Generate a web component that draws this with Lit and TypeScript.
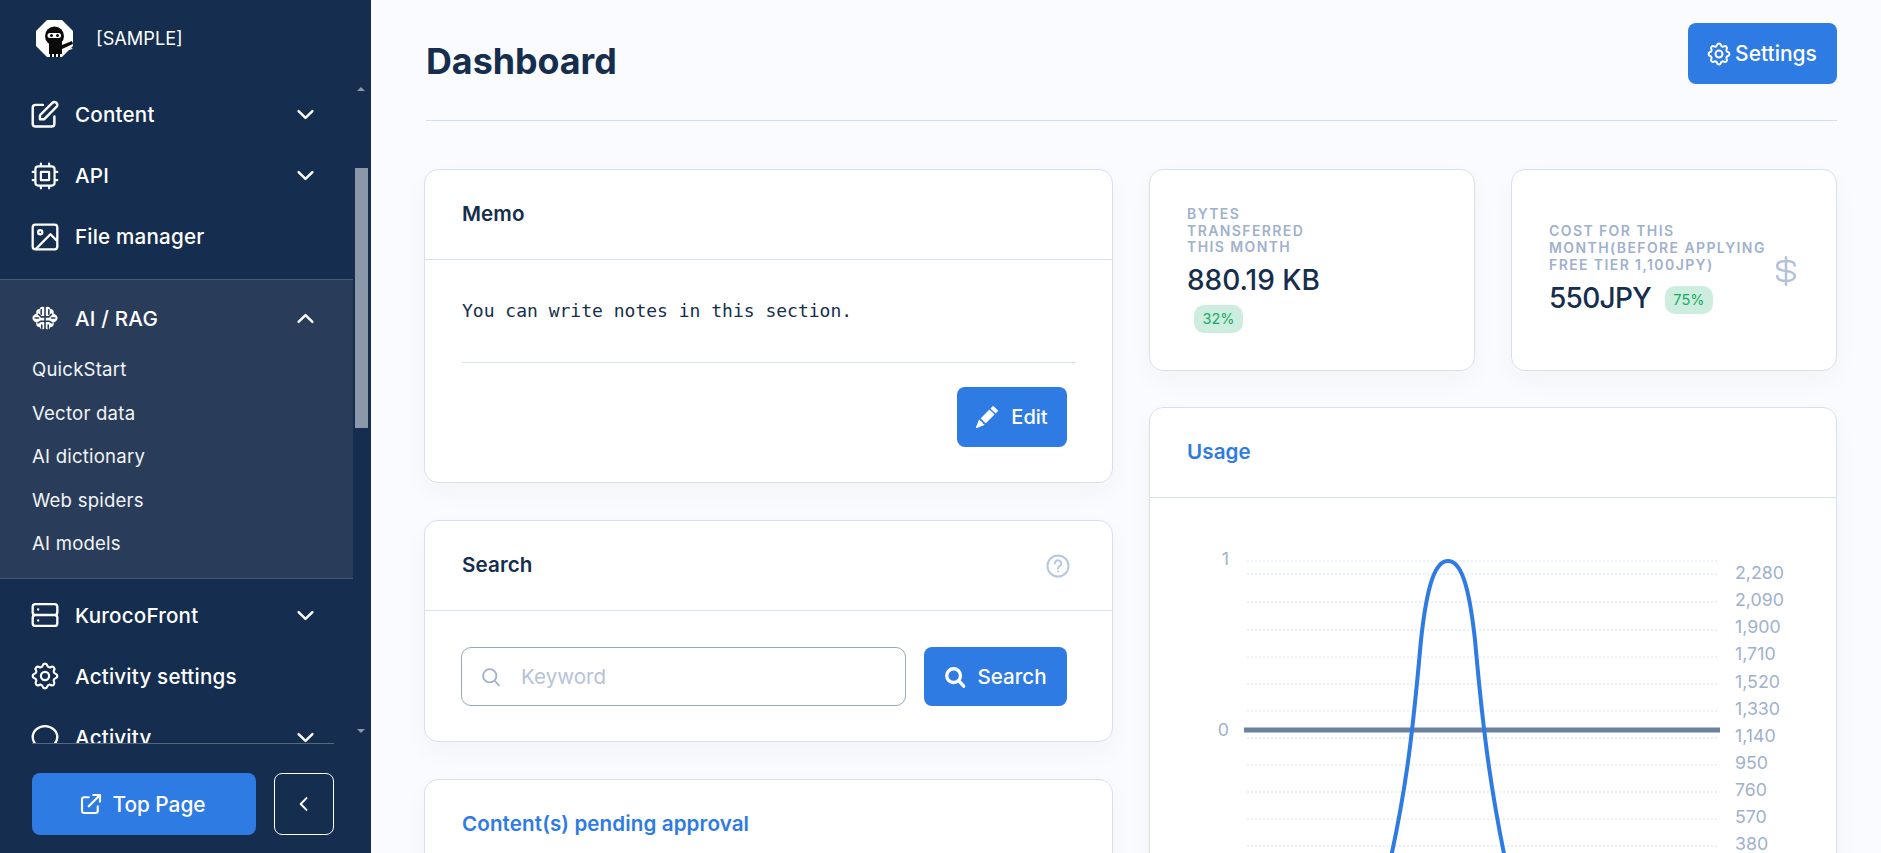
import { LitElement, html, css, svg } from "lit";
import { customElement } from "lit/decorators.js";

const ic = (d: string, w = 2, vb = "0 0 24 24") => html`<svg class="ic" viewBox=${vb} fill="none" stroke="currentColor" stroke-width=${w} stroke-linecap="round" stroke-linejoin="round"><path d=${d}></path></svg>`;
const TIGHT = "2.5 2.5 19 19";
const P = {
  edit: "M11 5H6a2 2 0 00-2 2v11a2 2 0 002 2h11a2 2 0 002-2v-5m-1.414-9.414a2 2 0 112.828 2.828L11.828 15H9v-2.828l8.586-8.586z",
  chip: "M9 3v2m6-2v2M9 19v2m6-2v2M5 9H3m2 6H3m18-6h-2m2 6h-2M7 19h10a2 2 0 002-2V7a2 2 0 00-2-2H7a2 2 0 00-2 2v10a2 2 0 002 2zM9 9h6v6H9V9z",
  photo: "M5 3h14a2 2 0 012 2v14a2 2 0 01-2 2H5a2 2 0 01-2-2V5a2 2 0 012-2zM21 15l-5-5L5 21M8.5 7a1.5 1.5 0 110 3 1.5 1.5 0 010-3z",
  server: "M5 12h14M5 12a2 2 0 01-2-2V6a2 2 0 012-2h14a2 2 0 012 2v4a2 2 0 01-2 2M5 12a2 2 0 00-2 2v4a2 2 0 002 2h14a2 2 0 002-2v-4a2 2 0 00-2-2M7 8h.01M7 16h.01",
  cog: "M10.325 4.317c.426-1.756 2.924-1.756 3.35 0a1.724 1.724 0 002.573 1.066c1.543-.94 3.31.826 2.37 2.37a1.724 1.724 0 001.065 2.572c1.756.426 1.756 2.924 0 3.35a1.724 1.724 0 00-1.066 2.573c.94 1.543-.826 3.31-2.37 2.37a1.724 1.724 0 00-2.572 1.065c-.426 1.756-2.924 1.756-3.35 0a1.724 1.724 0 00-2.573-1.066c-1.543.94-3.31-.826-2.37-2.37a1.724 1.724 0 00-1.065-2.572c-1.756-.426-1.756-2.924 0-3.35a1.724 1.724 0 001.066-2.573c-.94-1.543.826-3.31 2.37-2.37.996.608 2.296.07 2.572-1.065zM15 12a3 3 0 11-6 0 3 3 0 016 0z",
  chat: "M21 12c0 4.418-4.03 8-9 8a9.863 9.863 0 01-4.255-.949L3 20l1.395-3.72C3.512 15.042 3 13.574 3 12c0-4.418 4.03-8 9-8s9 3.582 9 8z",
  ext: "M10 6H6a2 2 0 00-2 2v10a2 2 0 002 2h10a2 2 0 002-2v-4M14 4h6m0 0v6m0-6L10 14",
  down: "M6 9l6 6 6-6",
  up: "M6 15l6-6 6 6",
  left: "M15 5l-7 7 7 7",
  dollar: "M19 7.5C19 5 16 4 12 4S5 5 5 8s3 3.5 7 4 7 1.5 7 4-3 4-7 4-7-1-7-4M12 1v22",
};
const brain = html`<svg class="ic" viewBox="0 0 24 24"><path fill="#fff" d="M12 2.5C10.5 1 7.5 1.2 7 3.6 4.6 3.6 3.4 5.6 4.1 7.8 1.6 8.7.4 10.6.4 12s1.2 3.3 3.7 4.2C3.400 18.400 4.600 20.400 7 20.400c.5 2.400 3.500 2.600 5 1.100 1.500 1.500 4.500 1.300 5-1.100 2.400 0 3.600-2 2.900-4.200 2.500-.900 3.700-2.800 3.700-4.200s-1.200-3.300-3.700-4.200C20.600 5.600 19.400 3.600 17 3.600 16.500 1.200 13.500 1 12 2.500z"></path>
  <path fill="none" stroke="#293d5a" stroke-width="1.5" stroke-linecap="round" d="M12 1.500v21M12 11H8.500L6 8.500M12 11h3.500L18 8.500M8.500 4.500v4M15.500 4.500v4M12 15H8l-2.500 1.500M12 15h4l2.500 1.500M3 12h3M21 12h-3M9 18.500v3M15 18.500v3"></path></svg>`;
const pencil = html`<svg class="ic" viewBox="0 0 16 16" fill="currentColor"><path d="M12.854.146a.5.5 0 00-.707 0L10.5 1.793 14.207 5.5l1.647-1.646a.5.5 0 000-.708l-3-3zm.646 6.061L9.793 2.5 3.293 9H3.500a.5.5 0 01.5.5v.5h.5a.5.5 0 01.5.5v.5h.5a.5.5 0 01.5.5v.5h.5a.5.5 0 01.5.5v.207l6.500-6.500zm-7.468 7.468A.5.5 0 016 13.500V13h-.5a.5.5 0 01-.5-.5V12h-.5a.5.5 0 01-.5-.5V11h-.5a.5.5 0 01-.5-.5V10h-.5a.499.499 0 01-.175-.032l-.179.178a.5.5 0 00-.11.168l-2 5a.5.5 0 00.65.65l5-2a.5.5 0 00.168-.11l.178-.178z"></path></svg>`;
const searchSolid = html`<svg class="ic" viewBox="0 0 24 24" fill="none" stroke="currentColor" stroke-width="3.6" stroke-linecap="round"><circle cx="10.5" cy="10.5" r="7.5"></circle><path d="M16.5 16.5L21.5 22"></path></svg>`;
const searchThin = html`<svg class="ic" viewBox="0 0 24 24" fill="none" stroke="currentColor" stroke-width="2.2" stroke-linecap="round"><circle cx="10.5" cy="10.5" r="8"></circle><path d="M16.500 16.500L21.500 22"></path></svg>`;
const help = html`<svg class="ic" viewBox="0 0 24 24" fill="none" stroke="currentColor" stroke-width="2" stroke-linecap="round"><circle cx="12" cy="12" r="10.5"></circle><path d="M8.800 9.500a3.200 3.200 0 116 1.500c-.8 1.200-2.800 1.600-2.800 3.400M12 17.600h.01"></path></svg>`;
const logo = html`<svg class="logo" viewBox="0 0 37 37"><polygon fill="#fff" points="11,0 26,0 37,11 37,26 26,37 11,37 0,26 0,11"></polygon>
  <circle cx="18.500" cy="16" r="9.500" fill="#0b0b0b"></circle>
  <path fill="#0b0b0b" d="M13 22h13v12H13zM26 25l10-4 1 3-11 5z"></path>
  <path fill="#fff" d="M26 31l10-3 .5 1-10.500 3z"></path>
  <path fill="#0b0b0b" d="M14 33h2v4h-2zM18 33h2v4h-2zM22 33h2v4h-2z"></path>
  <rect x="11.500" y="13" width="13.500" height="5" rx="2.500" fill="#fff"></rect><circle cx="15.500" cy="15.500" r="1.500" fill="#0b0b0b"></circle><circle cx="21.500" cy="15.500" r="1.500" fill="#0b0b0b"></circle></svg>`;

@customElement("app-root")
export class AppRoot extends LitElement {
  static styles = css`
    :host { display: block; width: 1881px; height: 853px; overflow: hidden; font-family: Inter, "Noto Sans", sans-serif; color: #152e4d; background: #fafbfe; }
    * { box-sizing: border-box; }
    .ic { display: block; flex: none; overflow: visible; }
    .app { display: flex; height: 853px; }

    .side { width: 371px; flex: none; background: #152e4f; color: #fff; display: flex; flex-direction: column; height: 853px; }
    .brand { height: 74px; flex: none; display: flex; align-items: flex-start; padding: 20px 0 0 36px; }
    .logo { width: 37px; height: 37px; display: block; }
    .brand span { margin-left: 23px; font-size: 18.2px; line-height: 36px; color: #fff; }
    .navwrap { display: flex; height: 669px; flex: none; }
    .nav { width: 353px; flex: none; overflow: hidden; height: 669px; }
    .row { display: flex; align-items: center; height: 61px; padding-left: 32px; font-size: 20.6px; letter-spacing: .2px; font-weight: 500; color: #fff; }
    .row > .ic { width: 26px; height: 26px; }
    .row .lbl { margin-left: 17px; flex: 1; }
    .row .chev { width: 15px; height: 15px; margin-right: 40px; }
    .row .chev .ic { width: 15px; height: 15px; }
    .first { margin-top: 10px; }
    .group { background: #293d5a; border-top: 1px solid #48596f; border-bottom: 1px solid #48596f; margin-top: 12px; padding-bottom: 12px; margin-bottom: 6px; }
    .group .row { height: 64px; margin-top: 6px; }
    .sub { display: block; height: 43.5px; line-height: 43.5px; padding-left: 32px; font-size: 18.6px; letter-spacing: .2px; color: #f2f4f7; }
    .group .sub:first-of-type { margin-top: -2px; }
    .bar { width: 18px; flex: none; display: flex; flex-direction: column; align-items: flex-start; }
    .arrow { width: 0; height: 0; border-left: 4px solid transparent; border-right: 4px solid transparent; margin-left: 4px; }
    .arrow.u { border-bottom: 4px solid #8a98aa; margin-top: 13px; }
    .arrow.d { border-top: 4px solid #8a98aa; margin-top: 301px; }
    .thumb { width: 13px; height: 260px; margin: 77px 0 0 2px; background: #8a98aa; }
    .foot { flex: none; margin: 0 37px 0 32px; border-top: 1px solid #57687e; padding-top: 29px; display: flex; gap: 18px; }
    .top { width: 224px; height: 62px; border-radius: 8px; background: #2e7be4; display: flex; align-items: center; justify-content: center; gap: 12px; font-size: 20.8px; font-weight: 500; color: #fff; }
    .top .ic { width: 18px; height: 18px; }
    .collapse { width: 60px; height: 62px; border: 1px solid #fff; border-radius: 8px; display: flex; align-items: center; justify-content: center; color: #fff; }
    .collapse .ic { width: 20px; height: 20px; }

    .main { flex: 1; min-width: 0; height: 853px; overflow: hidden; padding: 0 44px 0 54px; }
    .head { height: 121px; display: flex; justify-content: space-between; align-items: flex-start; border-bottom: 1px solid #d3e0ef; margin-left: 1px; }
    h1 { margin: 38px 0 0; font-size: 35.8px; line-height: 46px; font-weight: 700; color: #152e4d; }
    .btn { display: flex; align-items: center; justify-content: center; background: #2e7be4; color: #fff; border-radius: 8px; font-weight: 500; }
    .settings { margin-top: 23px; width: 149px; height: 61px; font-size: 21px; gap: 5px; }
    .settings .ic { width: 22px; height: 22px; }
    .cols { display: grid; grid-template-columns: 1fr 1fr; column-gap: 36px; margin: 48px 1px 0 -1px; width: 1412px; }
    .left { display: flex; flex-direction: column; gap: 37px; }
    .right { display: flex; flex-direction: column; gap: 36px; }
    .stats { display: grid; grid-template-columns: 1fr 1fr; gap: 36px; }
    .card { background: #fff; border: 1px solid #d7e0ee; border-radius: 14px; box-shadow: 0 10px 24px rgba(46, 54, 80, .035); }
    .chd { height: 90px; border-bottom: 1px solid #d7e0ee; display: flex; align-items: center; justify-content: space-between; padding: 0 37px 2px; font-size: 20.6px; letter-spacing: .1px; font-weight: 600; color: #152e4d; }
    .link { color: #2e7be4; }
    .cbody { padding: 37px 36px 35px 37px; }
    .memo { margin: 0; font: 18px/27px "DejaVu Sans Mono", monospace; color: #152e4d; padding-bottom: 38px; border-bottom: 1px solid #d7e0ee; }
    .acts { display: flex; justify-content: flex-end; padding: 24px 9px 0 0; }
    .edit { width: 110px; height: 60px; font-size: 20px; gap: 13px; }
    .edit .ic { width: 22px; height: 22px; }
    .help { color: #b7c7df; width: 24px; height: 24px; margin: 2px 5px 0 0; }
    .sform { display: flex; padding: 36px 45px 35px 36px; gap: 18px; }
    .input { width: 445px; height: 59px; border: 1px solid #98a8c2; border-radius: 10px; display: flex; align-items: center; padding-left: 19px; gap: 20px; font-size: 20.6px; color: #b5c3da; }
    .input .ic { width: 20px; height: 20px; color: #a0b1cb; }
    .sbtn { width: 143px; height: 59px; font-size: 20.6px; gap: 11px; }
    .sbtn .ic { width: 22px; height: 22px; }
    .third { height: 200px; }
    .stat { height: 202px; display: flex; align-items: center; padding-left: 37px; }
    .sl { font-size: 14px; line-height: 16.7px; letter-spacing: 1.4px; font-weight: 600; color: #a0b1cd; text-transform: uppercase; white-space: nowrap; }
    .val { font-size: 28px; line-height: 37px; font-weight: 500; color: #152e4d; margin-top: 6px; }
    .jpy { letter-spacing: -.7px; }
    .badge { display: inline-block; margin-left: 7px; height: 28px; padding: 0 8.5px; line-height: 28px; letter-spacing: 0; border-radius: 10px; background: #cdeede; color: #18a966; font-size: 14.5px; font-weight: 400; vertical-align: 3px; }
    .c1 { width: 170px; padding-top: 2px; }
    .c2 { width: 222px; }
    .dollar { width: 30px; height: 30px; color: #b4c2d9; margin-top: 2px; }
    .dollar .ic { width: 30px; height: 30px; }
    .usage { height: 520px; }
    .chart { display: block; width: 686px; height: 420px; }
    .chart text { font-family: Inter, sans-serif; font-size: 17.8px; fill: #a0b1cd; }
  `;

  private chart() {
    const grid = [561, 574, 602, 630, 657, 684, 711, 738, 765, 792, 819, 846];
    const labels: [string, number][] = [["2,280", 573], ["2,090", 600], ["1,900", 627], ["1,710", 654], ["1,520", 681.5], ["1,330", 709], ["1,140", 736], ["950", 763], ["760", 790], ["570", 817], ["380", 844]];
    return html`<svg class="chart" viewBox="1149 498 686 420">
      ${grid.map((y) => svg`<line x1="1246" x2="1718" y1=${y} y2=${y} stroke="#d9e3f1" stroke-width="1" stroke-dasharray="2 2"></line>`)}
      <text x="1228" y="565" text-anchor="end">1</text>
      <text x="1228" y="736" text-anchor="end">0</text>
      ${labels.map(([t, y]) => svg`<text x="1734" y=${y + 6}>${t}</text>`)}
      <rect x="1243" y="727.5" width="476" height="5" fill="#6d81a0"></rect>
      <path d="M1380 900C1405 800 1412 730 1420 640 1426 585 1434 561 1447 561 1460 561 1468 585 1474 640 1482 730 1490 800 1513 900" fill="none" stroke="#2e7be4" stroke-width="4"></path>
    </svg>`;
  }

  render() {
    const chev = (d: string) => html`<span class="chev">${ic(d, 2.1, "5.5 5.5 13 13")}</span>`;
    return html`<div class="app">
      <aside class="side">
        <div class="brand">${logo}<span>[SAMPLE]</span></div>
        <div class="navwrap">
          <nav class="nav">
            <div class="row first">${ic(P.edit, 1.7, "3.500 3 18 18")}<span class="lbl">Content</span>${chev(P.down)}</div>
            <div class="row">${ic(P.chip, 1.6, TIGHT)}<span class="lbl">API</span>${chev(P.down)}</div>
            <div class="row">${ic(P.photo, 1.7, TIGHT)}<span class="lbl">File manager</span></div>
            <div class="group">
              <div class="row">${brain}<span class="lbl">AI / RAG</span>${chev(P.up)}</div>
              ${["QuickStart", "Vector data", "AI dictionary", "Web spiders", "AI models"].map((s) => html`<a class="sub">${s}</a>`)}
            </div>
            <div class="row">${ic(P.server, 1.7, TIGHT)}<span class="lbl">KurocoFront</span>${chev(P.down)}</div>
            <div class="row">${ic(P.cog, 1.6, TIGHT)}<span class="lbl">Activity settings</span></div>
            <div class="row">${ic(P.chat, 1.7, TIGHT)}<span class="lbl">Activity</span>${chev(P.down)}</div>
          </nav>
          <div class="bar"><span class="arrow u"></span><div class="thumb"></div><span class="arrow d"></span></div>
        </div>
        <div class="foot">
          <div class="top">${ic(P.ext, 1.9, "4 4 16 16")}<span>Top Page</span></div>
          <div class="collapse">${ic(P.left, 2.4)}</div>
        </div>
      </aside>
      <main class="main">
        <header class="head"><h1>Dashboard</h1><div class="btn settings">${ic(P.cog, 1.7, TIGHT)}<span>Settings</span></div></header>
        <div class="cols">
          <div class="left">
            <section class="card">
              <div class="chd">Memo</div>
              <div class="cbody"><p class="memo">You can write notes in this section.</p>
                <div class="acts"><div class="btn edit">${pencil}<span>Edit</span></div></div></div>
            </section>
            <section class="card">
              <div class="chd">Search<span class="help">${help}</span></div>
              <div class="sform"><div class="input">${searchThin}<span>Keyword</span></div><div class="btn sbtn">${searchSolid}<span>Search</span></div></div>
            </section>
            <section class="card third"><div class="chd link">Content(s) pending approval</div></section>
          </div>
          <div class="right">
            <div class="stats">
              <section class="card stat"><div class="c1"><div class="sl">Bytes<br />Transferred<br />This month</div><div class="val">880.19 KB <span class="badge">32%</span></div></div></section>
              <section class="card stat"><div class="c2"><div class="sl">Cost for this<br />month(before applying<br />free tier 1,100JPY)</div><div class="val jpy">550JPY <span class="badge">75%</span></div></div><span class="dollar">${ic(P.dollar, 2)}</span></section>
            </div>
            <section class="card usage"><div class="chd link">Usage</div>${this.chart()}</section>
          </div>
        </div>
      </main>
    </div>`;
  }
}
